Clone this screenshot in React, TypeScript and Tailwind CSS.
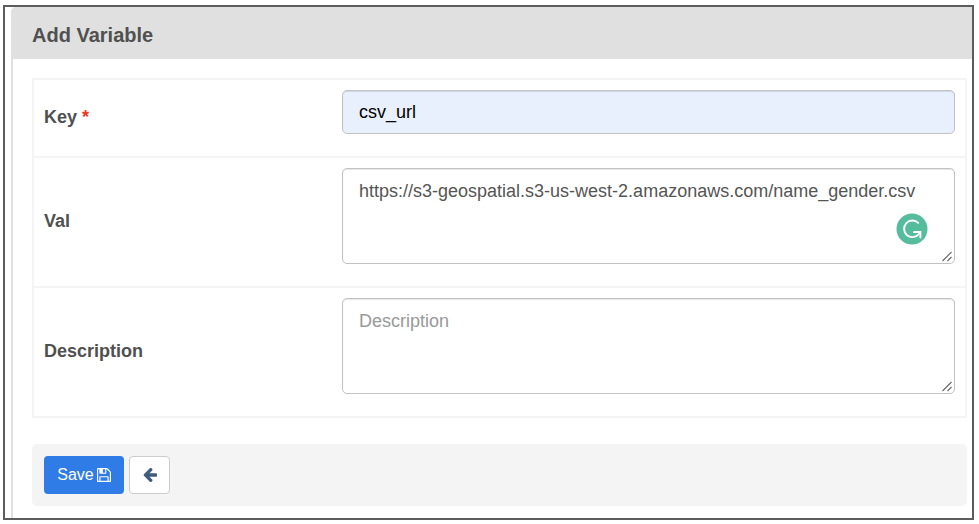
import React from "react";

const control =
  "block w-full rounded-[5px] border border-[#c2c2c2] px-4 text-lg shadow-[inset_0_1px_1px_rgba(0,0,0,0.1)] outline-none";

const area = `${control} h-24 resize-y bg-white pt-[10px] pb-2 leading-6 text-[#555555] placeholder:text-[#999999] [&::-webkit-resizer]:bg-transparent`;

function Row({
  id,
  label,
  required,
  children,
}: {
  id: string;
  label: string;
  required?: boolean;
  children: React.ReactNode;
}) {
  return (
    <div className="flex items-center border-b-2 border-[#f4f4f4] px-[10px]">
      <label
        htmlFor={id}
        className="w-[298px] shrink-0 pb-[3px] text-lg leading-6 font-bold text-[#505050]"
      >
        {label}
        {required && <span className="text-[#ee3322]"> *</span>}
      </label>
      <div className="relative min-w-0 flex-1 pt-[10px] pb-[22px]">{children}</div>
    </div>
  );
}

function ResizeGrip() {
  return (
    <svg
      className="pointer-events-none absolute right-[2px] bottom-[24px] size-[11px]"
      viewBox="0 0 11 11"
      fill="none"
      stroke="#666666"
      strokeWidth="1.1"
      aria-hidden="true"
    >
      <path d="M0.5 10L9.5 1M5.5 10L9.5 6" />
    </svg>
  );
}

function SaveIcon() {
  return (
    <svg className="size-[14px]" viewBox="0 128 1536 1536" fill="currentColor" aria-hidden="true">
      <path d="M384 1536h768v-384h-768v384zM1280 1536h128v-896q0-14-10-38.5t-20-34.5l-281-281q-10-10-34-20t-39-10v416q0 40-28 68t-68 28h-576q-40 0-68-28t-28-68v-416h-128v1280h128v-416q0-40 28-68t68-28h832q40 0 68 28t28 68v416zM896 608v-320q0-13-9.5-22.5t-22.5-9.5h-192q-13 0-22.5 9.5t-9.5 22.5v320q0 13 9.5 22.5t22.5 9.5h192q13 0 22.5-9.5t9.5-22.5zM1536 640v928q0 40-28 68t-68 28h-1344q-40 0-68-28t-28-68v-1344q0-40 28-68t68-28h928q40 0 88 20t76 48l280 280q28 28 48 76t20 88z" />
    </svg>
  );
}

function BackIcon() {
  return (
    <svg className="size-[14px]" viewBox="0 192 1536 1536" fill="currentColor" aria-hidden="true">
      <path d="M1536 896v128q0 53-32.5 90.5t-84.5 37.5h-704l293 294q38 36 38 90t-38 90l-75 76q-37 37-90 37-52 0-91-37l-651-652q-37-37-37-90 0-52 37-91l651-650q38-38 91-38 52 0 90 38l75 74q38 38 38 91t-38 91l-293 293h704q52 0 84.5 37.5t32.5 90.5z" />
    </svg>
  );
}

function GrammarIcon() {
  return (
    <svg className="size-8" viewBox="0 0 32 32" fill="none" aria-hidden="true">
      <circle cx="16" cy="16" r="15.5" fill="#55bd9b" />
      <path
        d="M22.2 9.9A8.3 8.3 0 1 0 22.6 21.4L24 19.4"
        stroke="#fff"
        strokeWidth="1.9"
        strokeLinecap="round"
      />
      <path d="M18 19H24.4V24.6" stroke="#fff" strokeWidth="1.9" strokeLinecap="round" />
    </svg>
  );
}

export default function App() {
  return (
    <main className="min-h-screen bg-white pt-[5px] pr-[5px] pb-1 pl-[3px] font-['Liberation_Sans',Arial,sans-serif]">
      <div className="border-2 border-[#5c5c5c] pl-[6px]">
        <section className="rounded-tl-[5px] border-l-2 border-[#e0e0e0] bg-white">
          <h1 className="rounded-tl-[3px] bg-[#e0e0e0] px-[19px] pt-4 pb-3 text-xl leading-6 font-bold text-[#505050]">
            Add Variable
          </h1>
          <form className="pt-[19px] pr-[5px] pb-3 pl-[19px]" onSubmit={(e) => e.preventDefault()}>
            <div className="border-2 border-b-0 border-[#f4f4f4]">
              <Row id="key" label="Key" required>
                <input
                  id="key"
                  type="text"
                  defaultValue="csv_url"
                  className={`${control} h-11 bg-[#e8f0fd] text-black`}
                />
              </Row>
              <Row id="val" label="Val">
                <textarea
                  id="val"
                  defaultValue="https://s3-geospatial.s3-us-west-2.amazonaws.com/name_gender.csv"
                  spellCheck={false}
                  className={area}
                />
                <ResizeGrip />
                <button
                  type="button"
                  aria-label="Check grammar"
                  className="absolute right-[27px] bottom-[41px]"
                >
                  <GrammarIcon />
                </button>
              </Row>
              <Row id="description" label="Description">
                <textarea id="description" placeholder="Description" className={area} />
                <ResizeGrip />
              </Row>
            </div>
            <div className="mt-[26px] flex gap-[5px] rounded-[5px] bg-[#f4f4f4] p-3">
              <button
                type="submit"
                className="flex h-[38px] w-20 items-center justify-center gap-[3px] rounded-[4px] bg-[#307ce6] text-base text-white"
              >
                Save
                <SaveIcon />
              </button>
              <button
                type="button"
                aria-label="Back"
                className="flex h-[38px] w-[41px] items-center justify-center rounded-[4px] border border-[#cccccc] bg-white text-[#3f5b7d]"
              >
                <BackIcon />
              </button>
            </div>
          </form>
        </section>
      </div>
    </main>
  );
}
